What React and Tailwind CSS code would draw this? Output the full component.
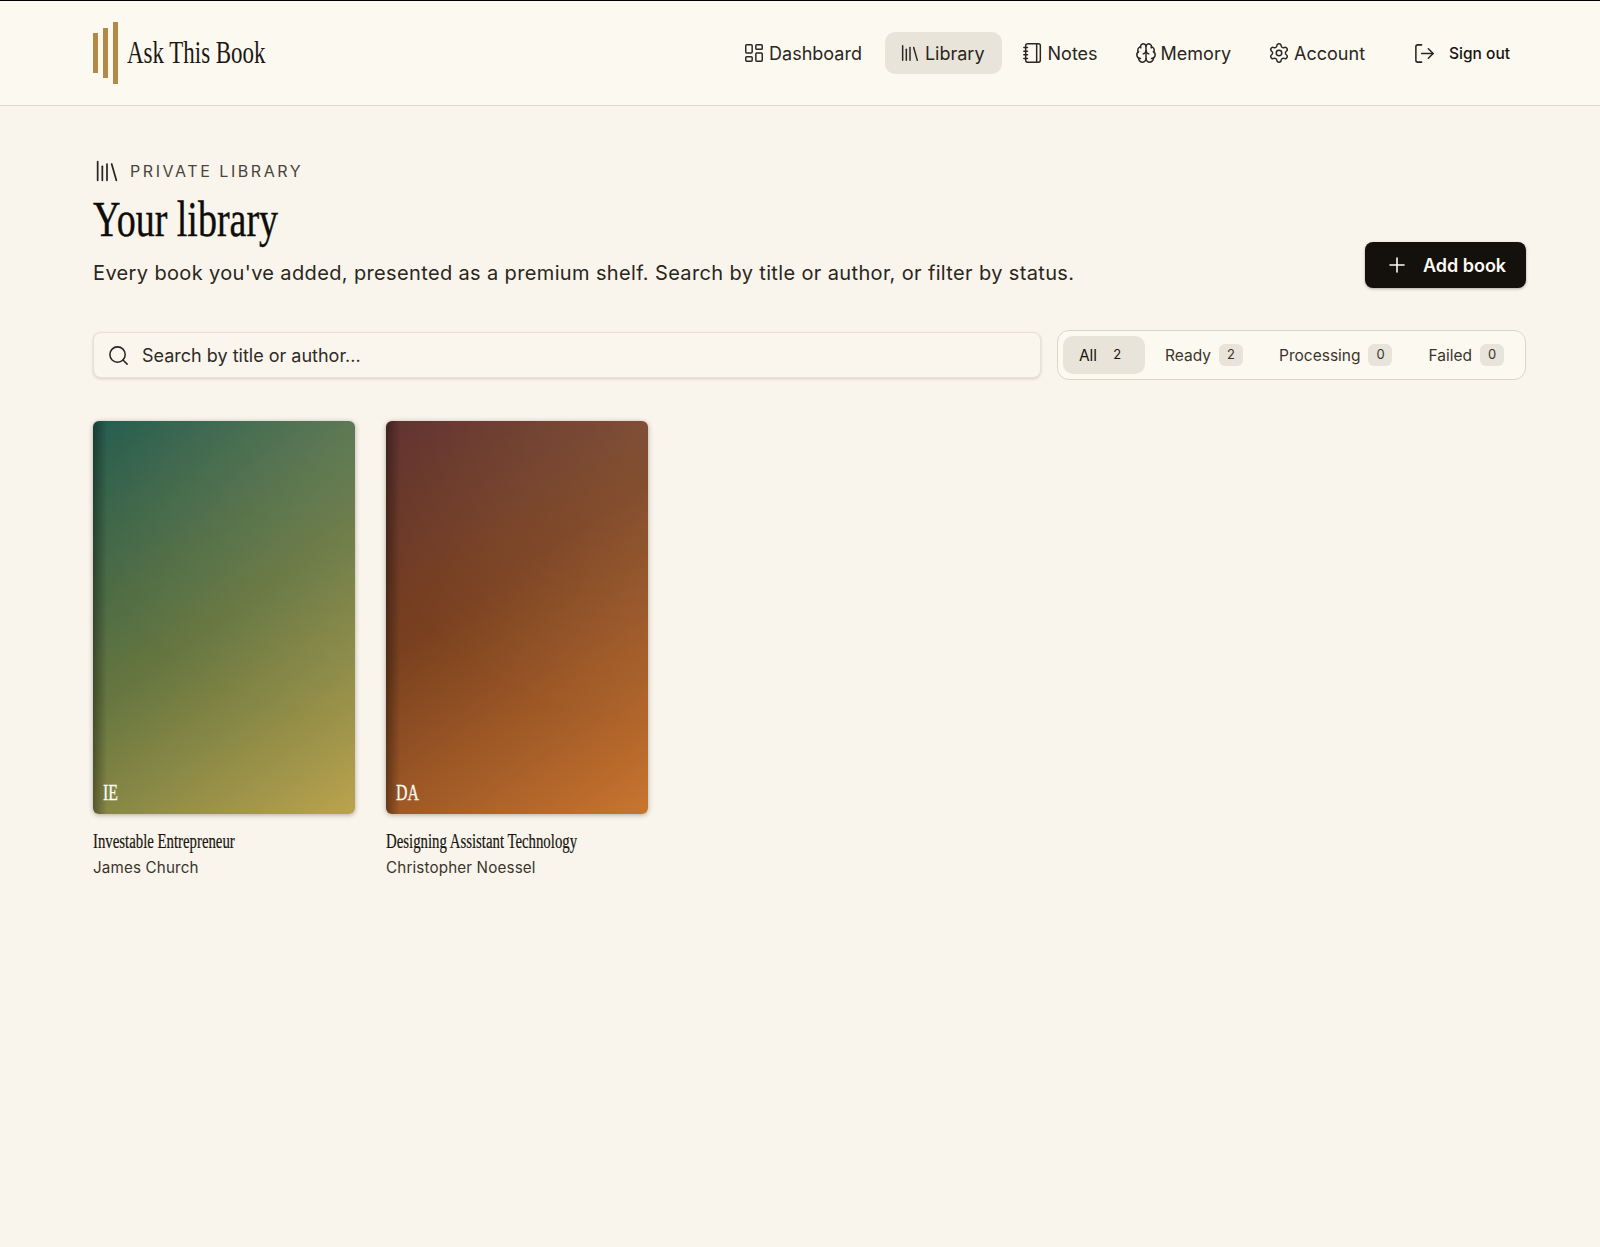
import { Brain, LayoutDashboard, Library, LogOut, Notebook, Plus, Search, Settings } from 'lucide-react';

const serif = 'font-["Liberation_Serif",serif]';

const navItems = [
  { label: 'Dashboard', icon: LayoutDashboard },
  { label: 'Library', icon: Library, active: true },
  { label: 'Notes', icon: Notebook },
  { label: 'Memory', icon: Brain },
  { label: 'Account', icon: Settings },
];

const filters = [
  { label: 'All', count: 2, active: true },
  { label: 'Ready', count: 2 },
  { label: 'Processing', count: 0 },
  { label: 'Failed', count: 0 },
];

const books = [
  {
    initials: 'IE',
    title: 'Investable Entrepreneur',
    author: 'James Church',
    cover: 'bg-[linear-gradient(145deg,#225a4d_0%,#667640_50%,#bba34e_100%)]',
  },
  {
    initials: 'DA',
    title: 'Designing Assistant Technology',
    author: 'Christopher Noessel',
    cover: 'bg-[linear-gradient(145deg,#5e302e_0%,#7a411f_42%,#c9752f_100%)]',
  },
];

function Logo() {
  return (
    <div className="flex items-center gap-[9px]">
      <div className="flex items-center gap-[5px]">
        <div className="h-[40px] w-[5px] bg-[#b38a45]" />
        <div className="h-[50px] w-[5px] bg-[#b38a45]" />
        <div className="h-[62px] w-[5px] bg-[#b38a45]" />
      </div>
      <span className={`${serif} w-[140px] origin-left scale-x-[.74] whitespace-nowrap text-[31px] text-[#1b1813]`}>
        Ask This Book
      </span>
    </div>
  );
}

function Header() {
  return (
    <header className="flex h-[105px] items-center justify-between border-b border-[#e0d9c9] bg-[#fcf9f1] pl-[93px] pr-[74px]">
      <Logo />
      <nav className="flex items-center gap-[6px]">
        {navItems.map(({ label, icon: Icon, active }) => (
          <a
            key={label}
            className={`flex h-[42px] items-center gap-1 rounded-[10px] pl-[14px] pr-[17px] text-[18px] text-[#2a2620] ${active ? 'bg-[#e8e4d9]' : ''}`}
          >
            <Icon size={22} strokeWidth={1.6} />
            {label}
          </a>
        ))}
        <button className="ml-3 flex h-[42px] items-center gap-[13px] pl-[13px] pr-4 text-[15.5px] font-medium text-[#17140f]">
          <LogOut size={23} strokeWidth={1.6} className="text-[#2a2620]" />
          <span className="pt-[1px]">Sign out</span>
        </button>
      </nav>
    </header>
  );
}

function Filters() {
  return (
    <div className="flex h-[50px] items-center gap-1 rounded-[12px] border border-[#ddd6c7] bg-[#fcf9f1] px-[5px]">
      {filters.map(({ label, count, active }) => (
        <button
          key={label}
          className={`flex h-[38px] items-center gap-2 rounded-[10px] px-4 text-[15.5px] ${active ? 'bg-[#e8e4d9] text-[#17140f]' : 'text-[#3a352c]'}`}
        >
          <span className="pt-[1px]">{label}</span>
          <span className={`flex h-[22px] w-[24px] items-center justify-center rounded-md text-[13px] ${active ? '' : 'bg-[#e8e4d9]'}`}>
            {count}
          </span>
        </button>
      ))}
    </div>
  );
}

function BookCard({ book }) {
  return (
    <div>
      <div className={`relative aspect-[2/3] overflow-hidden rounded-[6px] shadow-[0_1px_5px_rgba(40,30,15,0.35)] ${book.cover}`}>
        <div className="absolute inset-0 bg-[radial-gradient(circle_at_100%_0%,rgba(255,255,255,0.09),transparent_65%)]" />
        <div className="absolute inset-y-0 left-0 w-[14px] bg-gradient-to-r from-black/35 to-transparent" />
        <span className={`${serif} absolute bottom-[4px] left-[10px] origin-left scale-x-[.66] text-[24px] text-[#fdfaf3] [-webkit-text-stroke:0.3px_#fdfaf3]`}>
          {book.initials}
        </span>
      </div>
      <div className={`${serif} mt-[15px] origin-left scale-x-[.74] whitespace-nowrap text-[20px] leading-[24px] text-[#17140f] [-webkit-text-stroke:0.2px_#17140f]`}>
        {book.title}
      </div>
      <div className="mt-[3px] text-[15.2px] leading-[24px] tracking-[0.01em] text-[#3a352c]">{book.author}</div>
    </div>
  );
}

export default function App() {
  return (
    <div className='min-h-[1247px] border-t border-black bg-[#f9f5ec] font-["Inter",sans-serif]'>
      <Header />
      <main className="pl-[93px] pr-[74px] pt-[53px]">
        <div className="flex h-6 items-center gap-[9px]">
          <Library size={28} strokeWidth={1.5} className="text-[#2a2620]" />
          <span className="text-[16px] tracking-[0.16em] text-[#4a4439]">PRIVATE LIBRARY</span>
        </div>
        <div className="flex items-end justify-between">
          <div>
            <h1 className={`${serif} mt-[6px] origin-left scale-x-[.76] text-[50px] leading-[60px] text-[#0f0d0a] [-webkit-text-stroke:0.4px_#0f0d0a]`}>
              Your library
            </h1>
            <p className="mt-[9px] text-[20px] leading-[30px] tracking-[0.018em] text-[#2a2620]">
              Every book you've added, presented as a premium shelf. Search by title or author, or filter by status.
            </p>
          </div>
          <button className="flex h-[46px] w-[161px] items-center justify-center gap-[14px] rounded-[8px] bg-[#14110d] text-[18px] font-semibold text-[#fdfaf3] shadow-[0_1px_3px_rgba(0,0,0,0.3)]">
            <Plus size={24} strokeWidth={1.6} />
            Add book
          </button>
        </div>
        <div className="mt-[42px] flex items-center gap-4">
          <label className="flex h-[46px] flex-1 items-center gap-[12px] rounded-[8px] border border-[#e8e2d5] bg-[#faf6ee] px-[13px] shadow-[0_1px_3px_rgba(60,45,20,0.18)]">
            <Search size={23} strokeWidth={1.6} className="text-[#2a2620]" />
            <span className="text-[18px] text-[#2f2b25]">Search by title or author...</span>
          </label>
          <Filters />
        </div>
        <div className="mt-[41px] grid grid-cols-[262px_262px] gap-[31px]">
          {books.map((book) => (
            <BookCard key={book.title} book={book} />
          ))}
        </div>
      </main>
    </div>
  );
}
